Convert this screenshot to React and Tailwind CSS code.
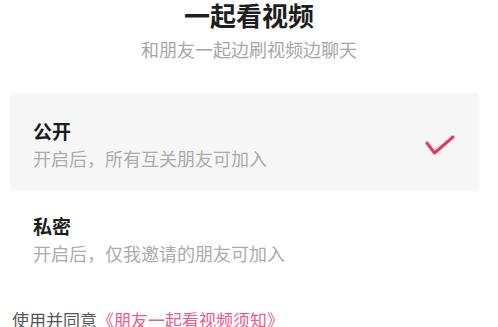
import React from "react";

const font = { fontFamily: '"Noto Sans CJK SC", "Noto Sans", sans-serif' };

function Option({ title, desc, selected, className }) {
  return (
    <div className={`mx-[10px] w-[469px] flex items-center justify-between pl-[23px] pr-[24px] ${selected ? "bg-[#f7f7f7]" : ""} ${className}`}>
      <div className="flex flex-col">
        <div className="text-[19px] leading-[24px] font-bold text-[#1c1c1c]">{title}</div>
        <div className="mt-[3px] text-[18px] leading-[24px] text-[#acacac]">{desc}</div>
      </div>
      {selected && (
        <svg width="30" height="22" viewBox="0 0 30 22">
          <path d="M2 9 L9.5 19 L28 3" fill="none" stroke="#e8375f" strokeWidth="3" strokeLinecap="round" strokeLinejoin="round" />
        </svg>
      )}
    </div>
  );
}

export default function App() {
  return (
    <div className="w-[498px] h-[327px] overflow-hidden bg-white" style={font}>
      <div className="text-center text-[26px] leading-[34px] font-bold text-[#1e1e1e] -mt-[2px]">一起看视频</div>
      <div className="mt-[4px] text-center text-[18px] leading-[26px] text-[#a6a6a6]">和朋友一起边刷视频边聊天</div>

      <Option
        className="mt-[31px] pt-[26px] pb-[21px]"
        title="公开"
        desc="开启后，所有互关朋友可加入"
        selected
      />
      <Option
        className="pt-[23px] pb-[20px]"
        title="私密"
        desc="开启后，仅我邀请的朋友可加入"
      />

      <div className="mt-[22px] pl-[12px] text-[17px] leading-[26px] text-[#555555]">
        使用并同意<span className="text-[#ee5b8b]">《朋友一起看视频须知》</span>
      </div>
    </div>
  );
}
